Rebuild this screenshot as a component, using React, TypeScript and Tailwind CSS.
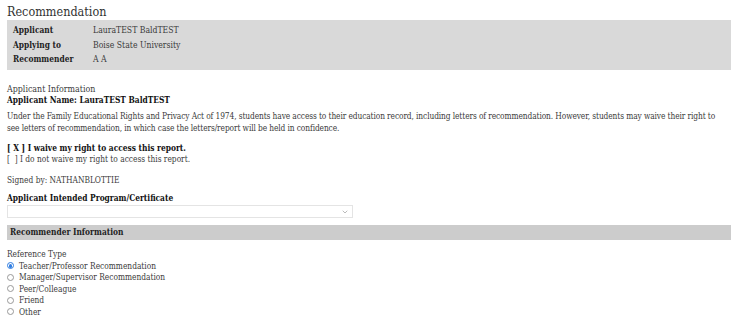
import { ChevronDown } from "lucide-react";

const refTypes = [
  "Teacher/Professor Recommendation",
  "Manager/Supervisor Recommendation",
  "Peer/Colleague",
  "Friend",
  "Other",
];

const summary = [
  ["Applicant", "LauraTEST BaldTEST"],
  ["Applying to", "Boise State University"],
  ["Recommender", "A A"],
];

export default function App() {
  return (
    <div className="h-[322px] w-[750px] overflow-hidden bg-white px-[7px] pt-[4px] font-['DejaVu_Serif',serif] font-stretch-condensed text-[#3a3a3a]">
      <h1 className="text-[12.5px] leading-[16px] text-[#333]">Recommendation</h1>

      <div className="mr-[12px] grid h-[50px] grid-cols-[80px_1fr] content-center bg-[#d9d9d9] px-[6px]">
        {summary.map(([k, v]) => (
          <div key={k} className="contents">
            <span className="flex h-[14.5px] items-center text-[8.3px] font-bold text-[#222]">{k}</span>
            <span className="flex h-[14.5px] items-center text-[8.6px]">{v}</span>
          </div>
        ))}
      </div>

      <div className="mt-[14px] text-[8.8px] leading-[11px]">Applicant Information</div>
      <div className="text-[8.3px] font-bold leading-[11px] text-[#111]">Applicant Name: LauraTEST BaldTEST</div>

      <p className="mt-[5px] w-[722px] text-[8.3px] leading-[11.5px] tracking-[-0.1px]">
        Under the Family Educational Rights and Privacy Act of 1974, students have access to their education record,
        including letters of recommendation. However, students may waive their right to see letters of recommendation,
        in which case the letters/report will be held in confidence.
      </p>

      <div className="mt-[9px] text-[8.3px] leading-[11px]">
        <div className="font-bold text-[#111]">[ X ] I waive my right to access this report.</div>
        <div>[ &nbsp;] I do not waive my right to access this report.</div>
      </div>

      <div className="mt-[10px] text-[8.3px] leading-[11px]">Signed by: NATHANBLOTTIE</div>

      <div className="mt-[7px] text-[8.3px] font-bold leading-[11px] text-[#111]">
        Applicant Intended Program/Certificate
      </div>
      <div className="mt-[1px] flex h-[13px] w-[346px] items-center justify-end border border-[#e4e4e4] pr-[3px]">
        <ChevronDown className="h-[8px] w-[8px] text-[#999]" strokeWidth={2} />
      </div>

      <div className="mr-[12px] mt-[7px] flex h-[15px] items-center bg-[#cccccc] px-[3px] text-[8.3px] font-bold text-[#222]">
        Recommender Information
      </div>

      <div className="mt-[9px] text-[8.3px] leading-[11px]">Reference Type</div>
      <div className="text-[8.3px]">
        {refTypes.map((t, i) => (
          <label key={t} className="flex h-[11.5px] items-center gap-[5px]">
            <span
              className={
                i === 0
                  ? "flex h-[7px] w-[7px] items-center justify-center rounded-full border border-[#2f7de1] bg-white"
                  : "h-[7px] w-[7px] rounded-full border border-[#999] bg-white"
              }
            >
              {i === 0 && <span className="h-[3.5px] w-[3.5px] rounded-full bg-[#2f7de1]" />}
            </span>
            <span>{t}</span>
          </label>
        ))}
      </div>
    </div>
  );
}
